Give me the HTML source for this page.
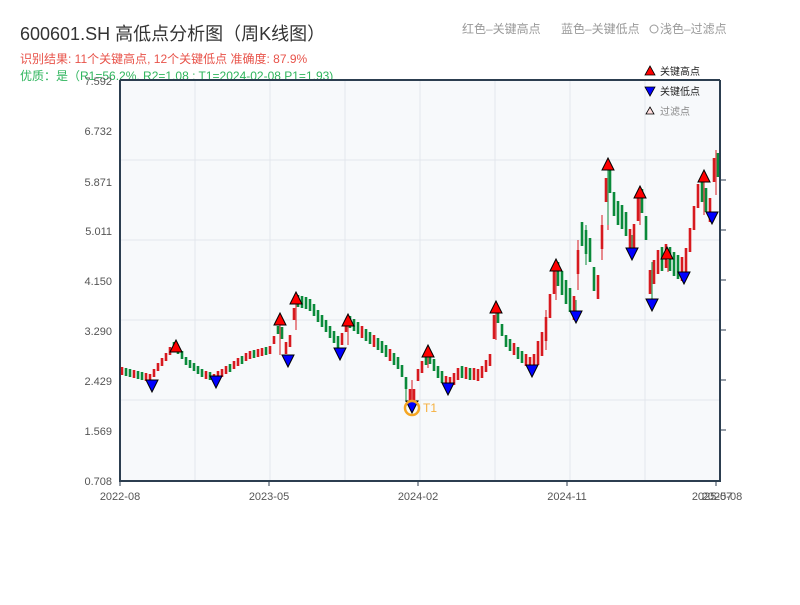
<!DOCTYPE html>
<html><head><meta charset="utf-8"><style>
body{margin:0;background:#fff;width:800px;height:600px;overflow:hidden;font-family:"Liberation Sans","Noto Sans CJK SC",sans-serif;}
</style></head><body>
<svg width="800" height="600" xmlns="http://www.w3.org/2000/svg" font-family="Liberation Sans, Noto Sans CJK SC, sans-serif">
<text x="20" y="40" font-size="18" fill="#333">600601.SH 高低点分析图（周K线图）</text>
<text x="20" y="63" font-size="12" fill="#e8534a">识别结果: 11个关键高点, 12个关键低点  准确度: 87.9%</text>
<text x="20" y="80" font-size="12" fill="#2fb55d">优质：是（R1=56.2%, R2=1.08 ; T1=2024-02-08 P1=1.93)</text>
<text x="462" y="33" font-size="12" fill="#999">红色–关键高点</text>
<text x="561" y="33" font-size="12" fill="#999">蓝色–关键低点</text>
<circle cx="654" cy="29" r="4" fill="none" stroke="#999"/>
<text x="660" y="33" font-size="12" fill="#999">浅色–过滤点</text>
<rect x="120" y="80" width="600" height="401" fill="#f7f9fb"/>
<g stroke="#e3e6ec" stroke-width="1">
<line x1="120" y1="160" x2="720" y2="160"/><line x1="120" y1="240" x2="720" y2="240"/><line x1="120" y1="320" x2="720" y2="320"/><line x1="120" y1="400" x2="720" y2="400"/>
<line x1="195" y1="80" x2="195" y2="481"/><line x1="270" y1="80" x2="270" y2="481"/><line x1="345" y1="80" x2="345" y2="481"/><line x1="420" y1="80" x2="420" y2="481"/><line x1="495" y1="80" x2="495" y2="481"/><line x1="570" y1="80" x2="570" y2="481"/><line x1="645" y1="80" x2="645" y2="481"/>
</g>
<path fill="none" stroke="#d7191f" stroke-width="2.6" d="M122 367V375M134 370V378M146 373V381M150 374V382M154 369V377M158 363V371M162 358V366M166 353V361M170 347V355M206 371V379M214 374V382M218 371V379M222 369V377M226 366V374M234 361V369M238 358V366M246 353V361M250 351V359M258 349V357M262 348V356M270 346V354M274 336V344M286 342V354M290 335V347M294 308V320M342 333V345M346 320V332M362 326V338M374 335V347M390 349V361M410 389V401M414 389V407M418 369V381M422 361V373M446 376V388M450 377V389M454 373V385M458 368V380M466 367V379M474 368V380M478 369V381M482 366V378M486 360V372M490 354V366M494 315V339M514 343V355M526 354V366M530 357V369M534 354V366M538 341V365M542 332V356M546 317V341M550 294V318M554 270V294M574 296V320M578 250V274M598 275V299M602 225V249M606 178V202M630 229V253M634 224V248M638 197V221M650 270V294M654 260V284M658 250V274M666 244V268M682 257V281M686 248V272M690 228V252M694 206V230M698 184V208M710 198V222M714 158V182"/>
<path fill="none" stroke="#d7191f" stroke-width="1" d="M280 325V355M296 300V330M348 326V345M412 380V405M428 357V368M496 313V340M556 271V300M608 170V230M640 198V225M668 260V272M704 182V215M716 150V195M578 240V290M602 215V260M546 310V350"/>
<path fill="none" stroke="#0a8a3a" stroke-width="2.6" d="M126 368V376M130 369V377M138 371V379M142 372V380M174 342V350M178 346V354M182 351V359M186 357V365M190 360V368M194 363V371M198 366V374M202 369V377M210 372V380M230 364V372M242 356V364M254 350V358M266 347V355M278 326V334M282 327V339M298 295V307M302 296V308M306 297V309M310 299V311M314 304V316M318 310V322M322 315V327M326 320V332M330 326V338M334 331V343M338 336V348M350 316V328M354 319V331M358 322V334M366 329V341M370 332V344M378 338V350M382 341V353M386 345V357M394 353V365M398 357V369M402 365V377M406 377V389M426 353V365M430 352V364M434 359V371M438 366V378M442 371V383M462 366V378M470 368V380M498 311V323M502 324V336M506 335V347M510 339V351M518 347V359M522 351V363M558 262V286M562 271V295M566 280V304M570 288V312M582 222V246M586 230V254M590 238V262M594 267V291M610 169V193M614 192V216M618 201V225M622 205V229M626 212V236M642 189V213M646 216V240M662 247V271M670 247V271M674 252V276M678 255V279M702 178V202M706 188V212M718 153V177"/>
<path fill="none" stroke="#0a8a3a" stroke-width="1" d="M652 262V305M632 235V258M576 300V320M608 170V225M406 380V402M586 225V265"/>
<g stroke="#2c3e50" stroke-width="2" fill="none">
<line x1="120" y1="80" x2="120" y2="482"/><line x1="119" y1="481" x2="721" y2="481"/><line x1="720" y1="80" x2="720" y2="482"/><line x1="120" y1="80" x2="720" y2="80"/>
</g>
<g stroke="#2c3e50" stroke-width="1">
<line x1="720" y1="180" x2="726" y2="180"/><line x1="720" y1="230" x2="726" y2="230"/><line x1="720" y1="280" x2="726" y2="280"/><line x1="720" y1="330" x2="726" y2="330"/><line x1="720" y1="380" x2="726" y2="380"/><line x1="720" y1="430" x2="726" y2="430"/>
<line x1="120" y1="481" x2="120" y2="486"/><line x1="269" y1="481" x2="269" y2="486"/><line x1="418" y1="481" x2="418" y2="486"/><line x1="567" y1="481" x2="567" y2="486"/><line x1="716" y1="481" x2="716" y2="486"/>
</g>
<g font-size="11" fill="#555" text-anchor="end">
<text x="112" y="85">7.592</text><text x="112" y="135">6.732</text><text x="112" y="186">5.871</text><text x="112" y="235">5.011</text><text x="112" y="285">4.150</text><text x="112" y="335">3.290</text><text x="112" y="385">2.429</text><text x="112" y="435">1.569</text><text x="112" y="485">0.708</text>
</g>
<g font-size="11" fill="#555" text-anchor="middle">
<text x="120" y="500">2022-08</text><text x="269" y="500">2023-05</text><text x="418" y="500">2024-02</text><text x="567" y="500">2024-11</text><text x="712" y="500">2025-07</text><text x="722" y="500">2025-08</text>
</g>
<g fill="#f00" stroke="#000" stroke-width="1">
<polygon points="176,340 182,352 170,352"/><polygon points="280,313 286,325 274,325"/><polygon points="296,292 302,304 290,304"/><polygon points="348,314 354,326 342,326"/><polygon points="428,345 434,357 422,357"/><polygon points="496,301 502,313 490,313"/><polygon points="556,259 562,271 550,271"/><polygon points="608,158 614,170 602,170"/><polygon points="640,186 646,198 634,198"/><polygon points="667,247 673,259 661,259"/><polygon points="704,170 710,182 698,182"/>
</g>
<g fill="#00f" stroke="#000" stroke-width="1">
<polygon points="146,380 158,380 152,392"/><polygon points="210,376 222,376 216,388"/><polygon points="282,355 294,355 288,367"/><polygon points="334,348 346,348 340,360"/><polygon points="406,401 418,401 412,413"/><polygon points="442,383 454,383 448,395"/><polygon points="526,365 538,365 532,377"/><polygon points="570,311 582,311 576,323"/><polygon points="626,248 638,248 632,260"/><polygon points="646,299 658,299 652,311"/><polygon points="678,272 690,272 684,284"/><polygon points="706,212 718,212 712,224"/>
</g>
<circle cx="412" cy="408" r="7" fill="none" stroke="#f5a623" stroke-width="2.5"/>
<text x="423" y="412" font-size="12" fill="#f5b040">T1</text>
<g font-size="10" fill="#222">
<polygon points="650,66 655,75 645,75" fill="#f00" stroke="#000" stroke-width="0.8"/><text x="660" y="75">关键高点</text>
<polygon points="645,87 655,87 650,96" fill="#00f" stroke="#000" stroke-width="0.8"/><text x="660" y="95">关键低点</text>
<polygon points="650,107 654,114 646,114" fill="#fdd" stroke="#000" stroke-width="0.8"/><text x="660" y="115" fill="#888">过滤点</text>
</g>
</svg>
</body></html>
